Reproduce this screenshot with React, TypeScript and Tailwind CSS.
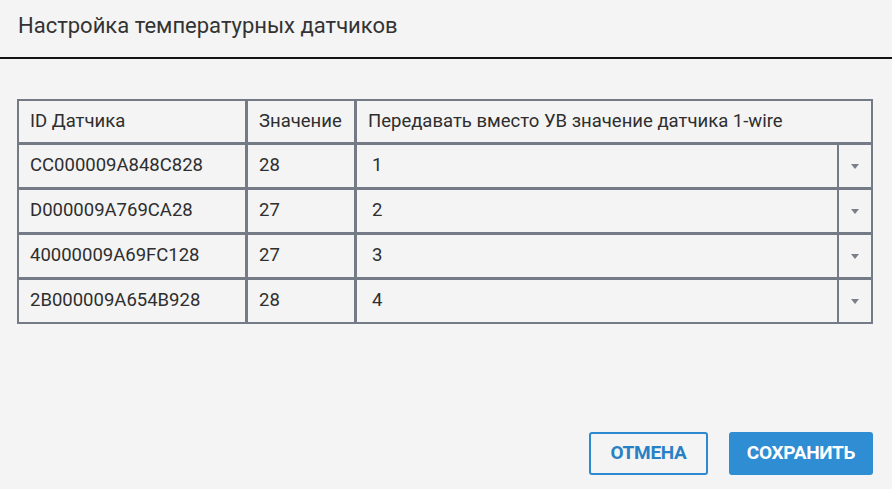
import React from "react";

const rows = [
  { id: "CC000009A848C828", v: "28", s: "1" },
  { id: "D000009A769CA28", v: "27", s: "2" },
  { id: "40000009A69FC128", v: "27", s: "3" },
  { id: "2B000009A654B928", v: "28", s: "4" },
];

function Arrow() {
  return (
    <svg width="8" height="5" viewBox="0 0 8 5">
      <path d="M0 0 L8 0 L4 5 Z" fill="#7a7f88" />
    </svg>
  );
}

export default function App() {
  return (
    <div
      className="w-[892px] h-[489px] bg-[#f4f4f4] flex flex-col text-[#2e2e2e]"
      style={{ fontFamily: "Roboto, 'Noto Sans', sans-serif" }}
    >
      <div className="h-[57px] pt-[13px] pl-[18px]">
        <div className="text-[22px] leading-[26px] text-[#333]">Настройка температурных датчиков</div>
      </div>
      <div className="h-[2px] bg-[#141414]" />
      <div className="mt-[40px] ml-[17px] w-[856px] grid grid-cols-[226px_106px_514px] gap-[3px] p-[2px] bg-[#747a86] text-[18.5px]">
        <div className="bg-[#f4f4f4] h-[41px] flex items-center pl-[11px]">ID Датчика</div>
        <div className="bg-[#f4f4f4] h-[41px] flex items-center pl-[11px]">Значение</div>
        <div className="bg-[#f4f4f4] h-[41px] flex items-center pl-[11px] whitespace-nowrap">Передавать вместо УВ значение датчика 1-wire</div>
        {rows.map((r) => (
          <React.Fragment key={r.id}>
            <div className="bg-[#f4f4f4] h-[42px] flex items-center pl-[11px]">{r.id}</div>
            <div className="bg-[#f4f4f4] h-[42px] flex items-center pl-[11px]">{r.v}</div>
            <div className="bg-[#f4f4f4] h-[42px] flex items-stretch">
              <div className="flex-1 flex items-center pl-[15px]">{r.s}</div>
              <div className="w-[34px] border-l-2 border-[#747a86] flex items-center justify-center">
                <Arrow />
              </div>
            </div>
          </React.Fragment>
        ))}
      </div>
      <div className="mt-auto flex justify-end gap-[21px] pr-[19px] pb-[14px]">
        <button className="w-[119px] h-[43px] border-2 border-[#2e8ad0] rounded-[3px] text-[#2a80c4] text-[19px] font-bold flex items-center justify-center tracking-[-0.3px]">
          ОТМЕНА
        </button>
        <button className="w-[144px] h-[43px] bg-[#2e8dd3] rounded-[3px] text-white text-[19px] font-bold flex items-center justify-center tracking-[-0.3px]">
          СОХРАНИТЬ
        </button>
      </div>
    </div>
  );
}
